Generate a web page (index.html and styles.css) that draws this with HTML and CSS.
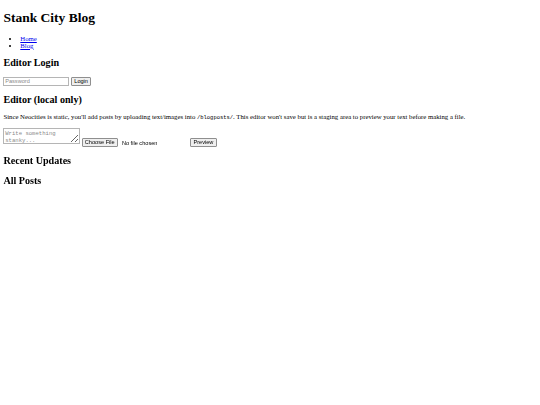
FILE: index.html
```html
<!DOCTYPE html>
<html lang="en">
  <head>
    <meta charset="UTF-8" />
    <title>Stank City Blog</title>
    <link rel="stylesheet" href="styles.css">
  </head>
  <body>
    <h1>Stank City Blog</h1>
    <nav>
      <ul>
        <li><a href="#">Home</a></li>
        <li><a href="#">Blog</a></li>
      </ul>
    </nav>

    <!-- Login -->
    <section class="login">
      <h2>Editor Login</h2>
      <input type="password" placeholder="Password" />
      <button>Login</button>
    </section>

    <!-- Editor -->
    <section class="editor">
      <h2>Editor (local only)</h2>
      <p>
        Since Neocities is static, you'll add posts by uploading text/images into
        <code>/blogposts/</code>. This editor won't save but is a staging area to
        preview your text before making a file.
      </p>
      <textarea placeholder="Write something stanky..."></textarea>
      <input type="file" />
      <button>Preview</button>
    </section>

    <section class="recent">
      <h2>Recent Updates</h2>
      <div id="recent"></div>
    </section>

    <section class="posts">
      <h2>All Posts</h2>
      <div id="posts"></div>
    </section>
  </body>
</html>
```

FILE: styles.css
```css
/* Base - everything sized small, like a shrunk-down default page */
body {
  margin: 3.4px;
  font-family: "Liberation Serif", "Times New Roman", serif;
  font-size: 6.75px;
  color: #000;
  background: #fff;
}

h1 {
  margin-top: 6.5px;
}

ul {
  padding-left: 16.9px;
}

a {
  color: #0000ee;
}

code {
  font-family: "Liberation Mono", "Courier New", monospace;
  font-size: 0.8125em;
}

/* Form controls */
input,
button,
textarea {
  font-family: "Liberation Sans", Arial, sans-serif;
  font-size: 5.625px;
}

input[type="password"] {
  box-sizing: border-box;
  width: 66px;
  padding: 0.5px 0.8px;
  border: 1px solid #b5b5b5;
}

input[type="password"]::placeholder,
textarea::placeholder {
  color: #8a8a8a;
}

button,
input[type="file"]::file-selector-button {
  padding: 0.5px 2.2px;
  border: 1px solid #8f8f8f;
  border-radius: 1px;
  background: #efefef;
  color: #000;
  font-size: 5.625px;
}

textarea {
  box-sizing: border-box;
  width: 76.5px;
  height: 16px;
  font-family: "Liberation Mono", "Courier New", monospace;
  padding: 0.8px;
  border: 1px solid #b5b5b5;
}
```
